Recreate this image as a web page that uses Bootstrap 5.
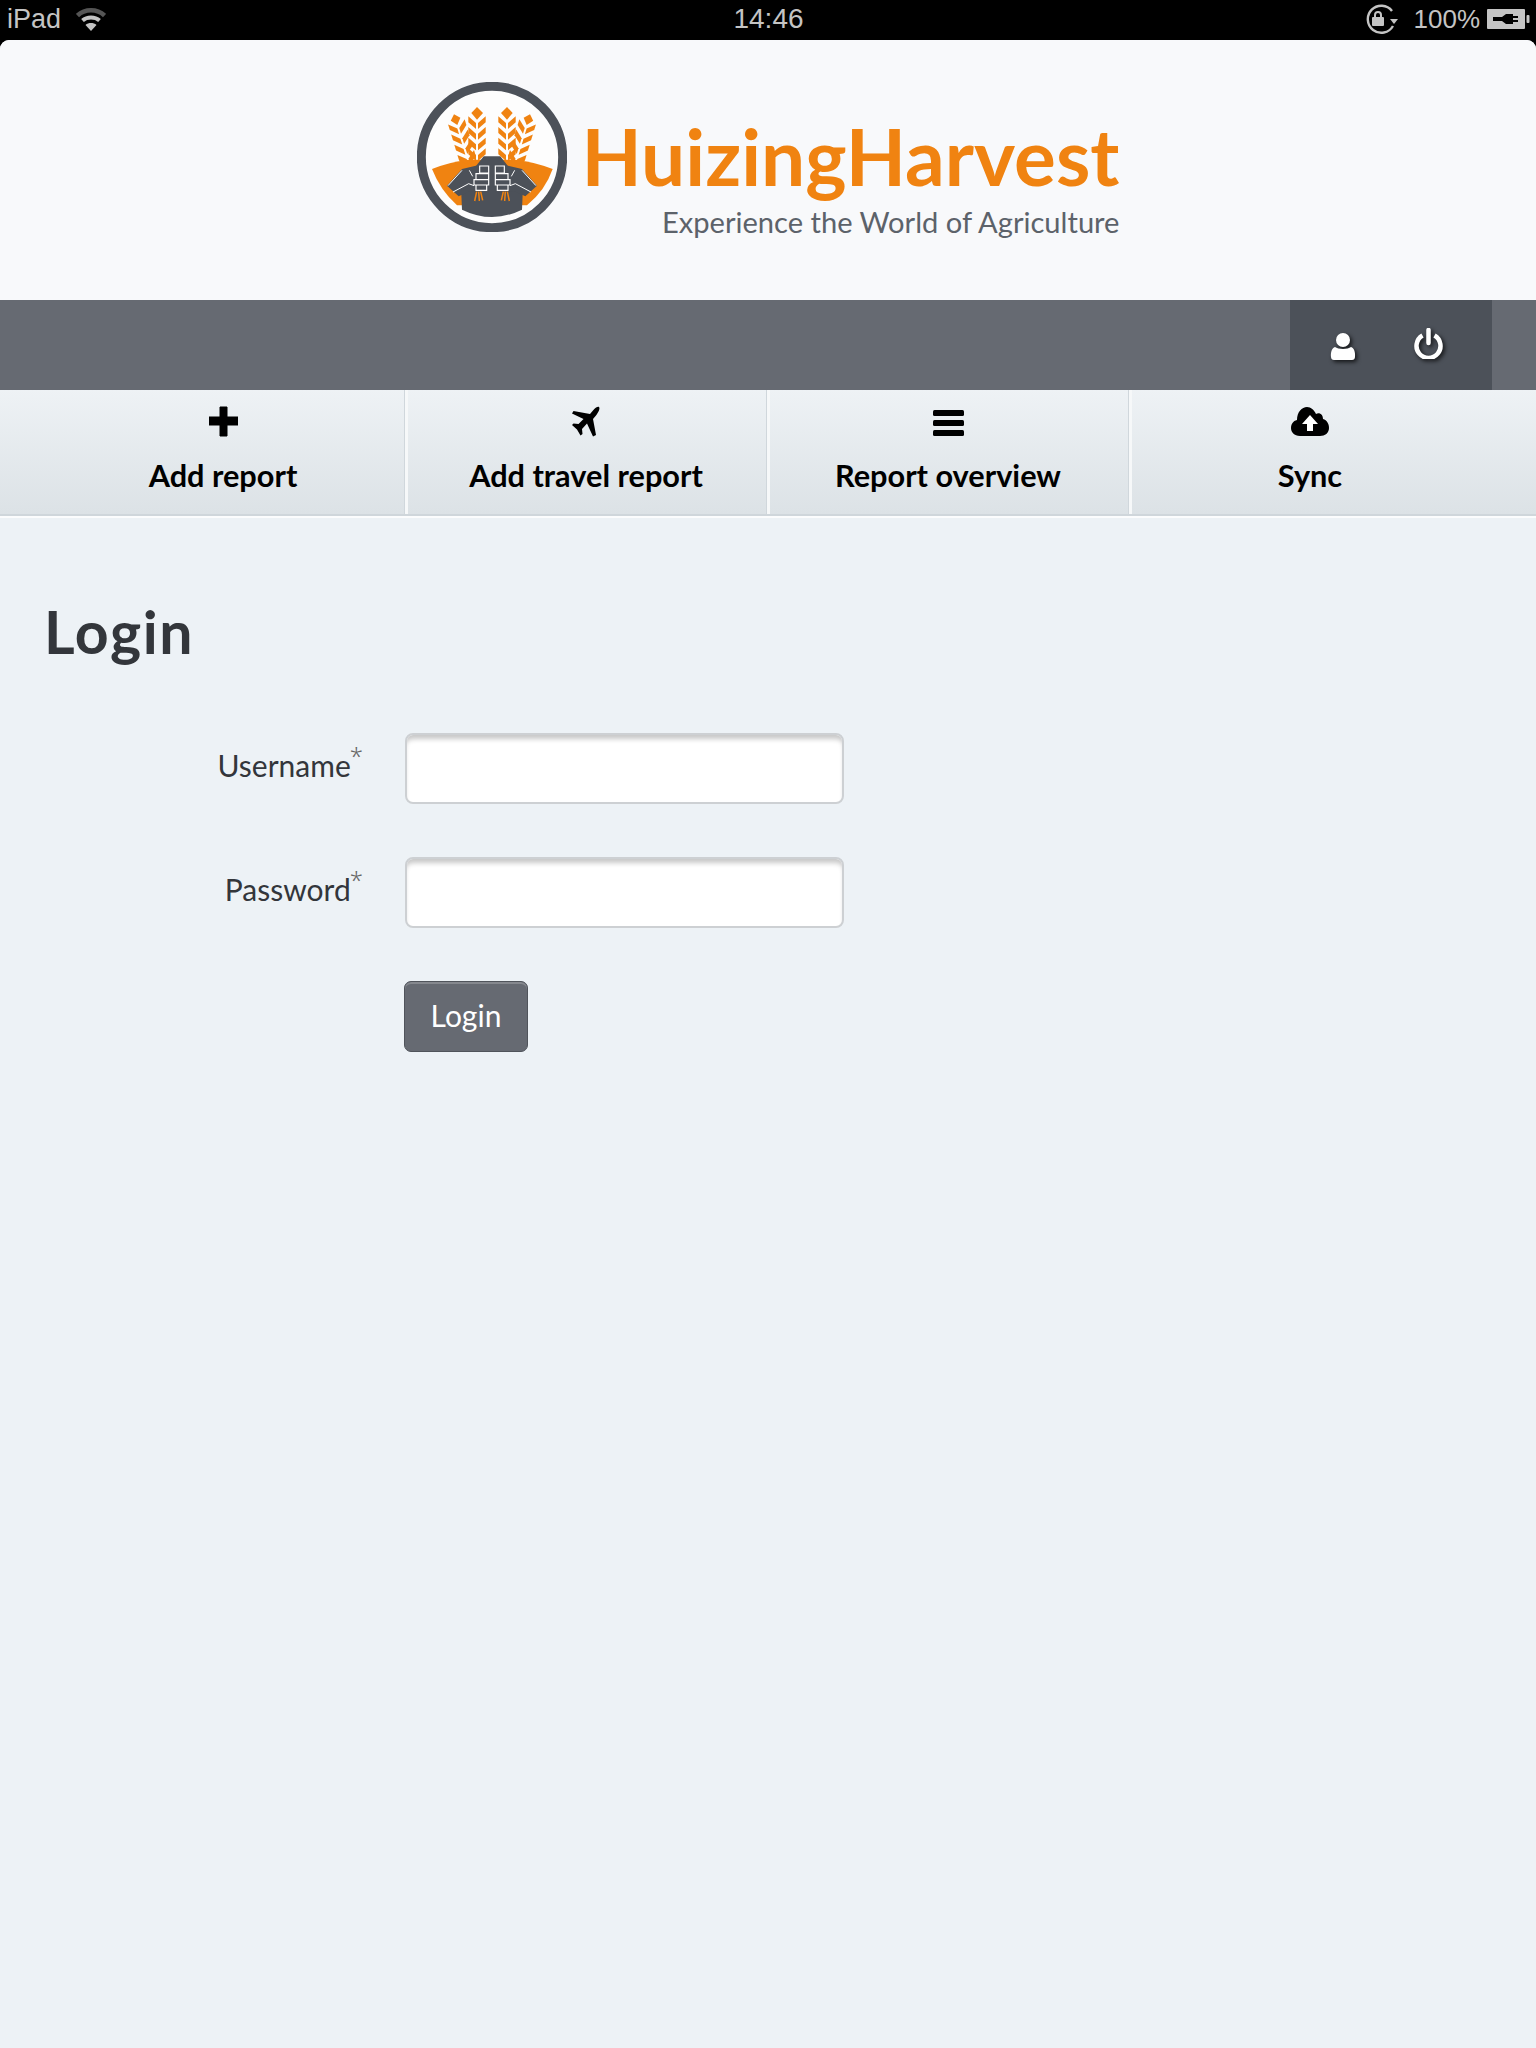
<!doctype html>
<html lang="en">
<head>
<meta charset="utf-8">
<title>Login</title>
<link rel="stylesheet" href="https://cdn.jsdelivr.net/npm/bootstrap@5.3.0/dist/css/bootstrap.min.css">
<style>
html,body{height:100%}
body{background:#000;font-family:"Lato","Noto Sans",sans-serif;color:#33363b;min-height:2048px}
.status-strip{height:40px;background:#000;color:#c4c4c4;font:27px/30px "Liberation Sans",Arial,sans-serif;padding:4px 6px 0 7px}
.status-strip svg{display:block}
.side-part{flex:1 1 0}
.app-shell{background:#edf2f6;border-radius:9px 9px 0 0;height:2008px;overflow:hidden}
.brand-head{height:260px;background:#f8f9fb;padding:42px 0 0 0}
.logo-mark{width:150px;height:150px;display:block;margin-right:15px}
.logo-name{font-weight:700;font-size:78.300px;line-height:80px;color:#f08311;height:90px;margin-top:34px}
.logo-tag{font-size:29.100px;line-height:36px;color:#5c626a;margin-top:-2px}
.tool-strip{height:90px;background:#666a72;padding-right:44px}
.tool-box{width:202px;height:90px;background:#4c5159;padding-left:40px;gap:58px}
.tool-box svg{filter:drop-shadow(2px 2px 2px rgba(0,0,0,.75))}
.main-nav{height:126px;background:linear-gradient(#eef2f5,#dce2e6);border-bottom:2px solid #cfd6db;box-shadow:0 2px 0 #fbfcfd;padding:0 40px 0 43px}
.main-nav .nav-item{width:362px;border-left:2px solid #f6f8f9;box-shadow:inset 1px 0 0 #f6f8f9,-1px 0 0 #d0d7dc}
.main-nav .nav-item:first-child{border-left:0;box-shadow:none}
.main-nav .nav-link{height:124px;padding:15px 2px 0 0;color:#000;font-weight:700;font-size:30.700px;line-height:38px;text-align:center}
.nav-glyph{display:block;height:32px;margin:0 auto 20px}
.login-wrap{padding:82px 44px 0}
.login-title{font-size:59px;line-height:68px;font-weight:700;color:#33363b;margin:0 0 67px;letter-spacing:1.600px}
.field-row{gap:42px;margin-bottom:53px;width:800px}
.field-label{width:319px;padding:0 0 8px;text-align:right;font-size:30px;line-height:36px;color:#33363b}
.req-mark{font:300 24px/0 "Noto Sans",sans-serif;vertical-align:0;color:#666;margin-left:-1px}
.field-input.form-control{width:439px;height:71px;border:2px solid #cdd0d3;border-radius:8px;background:#fff;box-shadow:inset 0 6px 5px -2px rgba(0,0,0,.22)}
.go-btn.btn{width:124px;height:71px;margin-left:360px;padding:0 0 3px;background:#666a72;border:1px solid #50545b;border-radius:7px;color:#fff;font-size:30px;box-shadow:inset 0 2px 0 #85888e}
</style>
</head>
<body>
<div class="status-strip d-flex align-items-start">
  <div class="side-part d-flex align-items-start gap-3">
    <span>iPad</span>
    <svg width="30" height="24" viewBox="0 0 30 24" style="margin:4px 0 0 -1px"><path d="M1.5 7.5C9 .5 21 .5 28.5 7.5" fill="none" stroke="#555" stroke-width="4.5"/><path d="M6.5 12.5C11 8.500 19 8.500 23.500 12.500" fill="none" stroke="#c4c4c4" stroke-width="4"/><path d="M15 23l-5.500-6c3-2.600 8-2.600 11 0z" fill="#c4c4c4"/></svg>
  </div>
  <div style="font-size:28px">14:46</div>
  <div class="side-part d-flex justify-content-end align-items-start">
    <svg width="36" height="30" viewBox="0 0 36 30" style="margin:0 15px 0 0"><path d="M30 22A13.500 13.500 0 1 1 29 7" fill="none" stroke="#c4c4c4" stroke-width="2.400"/><path d="M27 15h8l-4 5z" fill="#c4c4c4"/><rect x="9" y="13" width="12" height="9" rx="1" fill="#c4c4c4"/><path d="M12 13v-2a3 3 0 0 1 6 0v2" fill="none" stroke="#c4c4c4" stroke-width="2"/></svg>
    <span style="font-size:26px">100%</span>
    <svg width="43" height="20" viewBox="0 0 43 20" style="margin:5px 0 0 7px"><path fill-rule="evenodd" fill="#c4c4c4" d="M1 0h36a1 1 0 0 1 1 1v18a1 1 0 0 1-1 1H1a1 1 0 0 1-1-1V1a1 1 0 0 1 1-1zM6 8v4h9l4 3h7v-2h5v-2h-5V9h5V7h-5V5h-7l-4 3z"/><rect x="39.500" y="6" width="3" height="8" rx="1" fill="#c4c4c4"/></svg>
  </div>
</div>
<div class="app-shell">
  <header class="brand-head d-flex justify-content-center align-items-start">
    <svg class="logo-mark" viewBox="55 35 450 450" role="img" aria-label="Logo">
      <defs>
        <g id="grainup"><path d="M-26 -12L-3 8V26L-26 6Z" fill="#f08311"/><path d="M26 -12L3 8V26L26 6Z" fill="#f08311"/></g>
        <g id="stalks">
          <path d="M235 110L253 128L235 148L218 128Z" fill="#f08311"/>
          <use href="#grainup" x="235" y="150"/><use href="#grainup" x="235" y="182"/><use href="#grainup" x="235" y="214"/><use href="#grainup" x="235" y="246"/>
          <g transform="rotate(-17 190 210)">
            <path d="M190 128L205 144L190 162L175 144Z" fill="#f08311"/>
            <use href="#grainup" x="190" y="164"/><use href="#grainup" x="190" y="196"/><use href="#grainup" x="190" y="228"/><use href="#grainup" x="190" y="260"/>
          </g>
        </g>
        <g id="fist">
          <path d="M145 346L190 296L238 285H270V366H228L215 362L180 378Z" fill="#4c5159"/>
          <path d="M163 365L210 340L226 346M212 300L222 318M148 346L190 300" fill="none" stroke="#fff" stroke-width="3"/>
          <path d="M243 287H270V308H243ZM232 310H270V328H232ZM226 328H270V344H226ZM232 344H264V360H232Z" fill="#4c5159" stroke="#fff" stroke-width="3.500"/>
          <path d="M234 364L228 392M240 364L242 392M246 364L252 390" stroke="#f08311" stroke-width="4.500" fill="none"/>
        </g>
      </defs>
      <circle cx="280" cy="260" r="212" fill="#fdfdfd" stroke="#4c5159" stroke-width="27"/>
      <path d="M100 296Q150 275 210 268H350Q410 275 462 296Q440 360 385 405H175Q125 360 100 296Z" fill="#f08311"/>
      <path d="M255 258H305L338 300L372 372L370 418Q280 462 190 418L188 372L222 300Z" fill="#4c5159"/>
      <use href="#stalks"/>
      <use href="#stalks" transform="translate(560 0) scale(-1 1)"/>
      <use href="#fist"/>
      <use href="#fist" transform="translate(560 0) scale(-1 1)"/>
    </svg>
    <div class="text-end">
      <div class="logo-name">HuizingHarvest</div>
      <div class="logo-tag">Experience the World of Agriculture</div>
    </div>
  </header>
  <div class="tool-strip d-flex justify-content-end">
    <div class="tool-box d-flex align-items-center">
      <svg width="26" height="28" viewBox="0 0 26 28" style="margin-top:3px"><circle cx="13" cy="7" r="7" fill="#fff"/><path d="M1 24c-.5-5 1-9 4-10 3 2.500 13 2.500 16 0 3 1 4.500 5 4 10q-.2 3-3 3H4q-2.800 0-3-3z" fill="#fff"/></svg>
      <svg width="29" height="31" viewBox="0 0 29 31" style="margin-top:-4px"><path d="M8.500 7.500a12 12 0 1 0 12 0" fill="none" stroke="#fff" stroke-width="4.500"/><path d="M14.500 2v13" stroke="#fff" stroke-width="4.500" stroke-linecap="round"/></svg>
    </div>
  </div>
  <nav class="main-nav nav">
    <div class="nav-item"><a class="nav-link" href="#">
      <svg class="nav-glyph" width="29" height="32" viewBox="0 0 29 32"><path d="M11 2h7v10h11v8H18v11h-7V20H0v-8h11z" fill="#000" stroke="#000" stroke-linejoin="round"/></svg>Add report</a></div>
    <div class="nav-item"><a class="nav-link" href="#">
      <svg class="nav-glyph" width="29" height="32" viewBox="0 0 29 32"><path d="M27 2c1.500 1.500-1 6-3 8.500L21 14l3 16-3 1.500-6-13-5 5.500.5 5-2 1.500-3.500-6L0 20l1.500-1.500 5 .5 5-5L0 8.500 1.500 6 18 9l3-3.500C23 3 26 1 27 2z" fill="#000"/></svg>Add travel report</a></div>
    <div class="nav-item"><a class="nav-link" href="#">
      <svg class="nav-glyph" width="31" height="32" viewBox="0 0 31 32"><g fill="#000"><rect y="5" width="31" height="6" rx="1.500"/><rect y="15" width="31" height="6" rx="1.500"/><rect y="25" width="31" height="6" rx="1.500"/></g></svg>Report overview</a></div>
    <div class="nav-item"><a class="nav-link" href="#">
      <svg class="nav-glyph" width="38" height="32" viewBox="0 0 38 32"><path d="M9 31C3 31 0 27 0 23c0-4 2-7 6-8C6 7 11 2 16 2c4 0 7 3 9 7 3-2 7 0 7 5 4 1 6 5 6 9 0 5-4 8-9 8z" fill="#000"/><path d="M19 10l8 9h-5v7h-6v-7h-5z" fill="#fff"/></svg>Sync</a></div>
  </nav>
  <main class="login-wrap">
    <h1 class="login-title">Login</h1>
    <form>
      <div class="field-row d-flex align-items-center">
        <label class="field-label form-label mb-0" for="u">Username<sup class="req-mark">*</sup></label>
        <input class="field-input form-control" id="u" type="text">
      </div>
      <div class="field-row d-flex align-items-center">
        <label class="field-label form-label mb-0" for="p">Password<sup class="req-mark">*</sup></label>
        <input class="field-input form-control" id="p" type="password">
      </div>
      <button type="button" class="go-btn btn">Login</button>
    </form>
  </main>
</div>
<script src="https://cdn.jsdelivr.net/npm/bootstrap@5.3.0/dist/js/bootstrap.bundle.min.js"></script>
</body>
</html>
